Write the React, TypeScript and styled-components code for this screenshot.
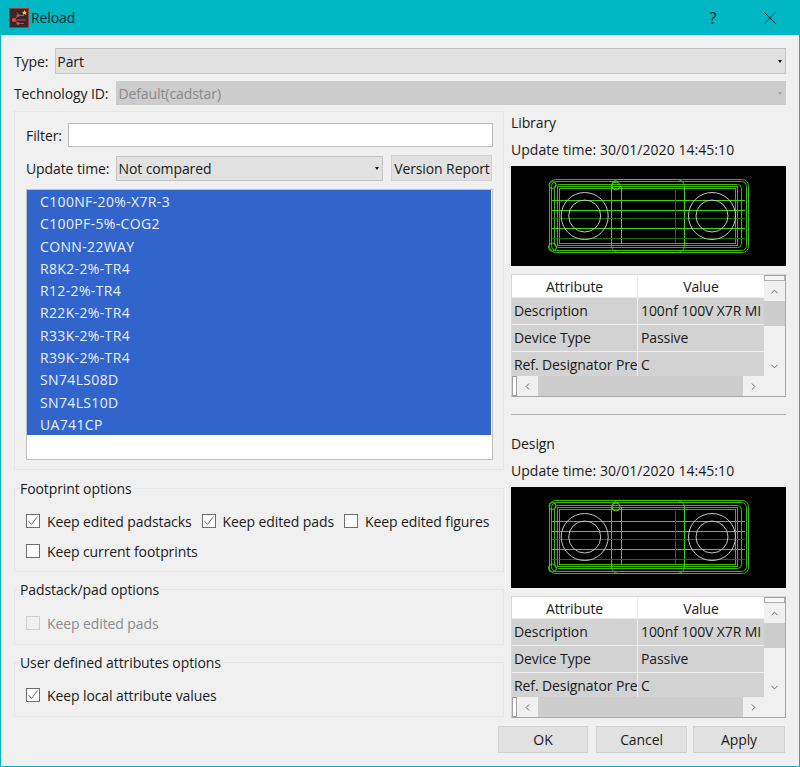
import React from "react";
import styled, { createGlobalStyle } from "styled-components";
import { ChevronUp, ChevronDown, ChevronLeft, ChevronRight } from "lucide-react";

const Global = createGlobalStyle`
  html, body { margin: 0; padding: 0; background: #f0f0f0; }
  * { box-sizing: border-box; }
`;

const Window = styled.div`
  width: 800px;
  height: 767px;
  display: flex;
  flex-direction: column;
  overflow: hidden;
  border: 1px solid #00b7c3;
  border-top: 0;
  background: #f0f0f0;
  color: #1a1a1a;
  font-family: "Open Sans", "Noto Sans", sans-serif;
  font-size: 14px;
  letter-spacing: -0.1px;
`;

const TitleBar = styled.div`
  height: 35px;
  flex: none;
  display: flex;
  align-items: center;
  background: #00b7c3;
  padding-left: 8px;
  color: #0c2a2e;
`;

const TitleText = styled.span`
  margin-left: 2px;
  flex: 1;
`;

const HelpMark = styled.span`
  width: 20px;
  text-align: center;
  font-size: 16px;
  margin-right: 41px;
`;

const CloseMark = styled.svg`
  width: 12px;
  height: 12px;
  margin-right: 23px;
`;

const Content = styled.div`
  flex: 1;
  display: flex;
  flex-direction: column;
  padding: 13px 13px 0;
`;

const FormRow = styled.div<{ $gap: number; $mb: number }>`
  display: flex;
  align-items: center;
  gap: ${(p) => p.$gap}px;
  margin-bottom: ${(p) => p.$mb}px;
`;

const Combo = styled.div<{ $h: number; $disabled?: boolean; $w?: number }>`
  flex: ${(p) => (p.$w ? "none" : "1")};
  width: ${(p) => (p.$w ? `${p.$w}px` : "auto")};
  height: ${(p) => p.$h}px;
  display: flex;
  align-items: center;
  justify-content: space-between;
  padding: 0 3px 0 1px;
  background: ${(p) => (p.$disabled ? "#cccccc" : "#e1e1e1")};
  border: 1px solid ${(p) => (p.$disabled ? "#cccccc" : "#c4c4c4")};
  color: ${(p) => (p.$disabled ? "#8a8a8a" : "#1a1a1a")};
`;

const ComboArrow = styled.i<{ $disabled?: boolean }>`
  width: 0;
  height: 0;
  border-left: 2.5px solid transparent;
  border-right: 2.5px solid transparent;
  border-top: 3px solid ${(p) => (p.$disabled ? "#a8a8a8" : "#111")};
`;

const Columns = styled.div`
  display: grid;
  grid-template-columns: 490px 275px;
  column-gap: 7px;
`;

const LeftCol = styled.div`
  display: flex;
  flex-direction: column;
`;

const RightCol = styled.div`
  display: flex;
  flex-direction: column;
`;

const Panel = styled.div`
  height: 359px;
  border: 1px solid #e6e6e6;
  padding: 11px 10px 9px 11px;
  display: flex;
  flex-direction: column;
  margin-bottom: 9px;
`;

const FilterInput = styled.div`
  flex: 1;
  height: 24px;
  background: #fff;
  border: 1px solid #bcbcbc;
`;

const PlainButton = styled.button<{ $w: number; $h: number; $ml?: number }>`
  width: ${(p) => p.$w}px;
  height: ${(p) => p.$h}px;
  margin-left: ${(p) => p.$ml ?? 0}px;
  flex: none;
  padding: 0;
  font: inherit;
  letter-spacing: inherit;
  color: #1a1a1a;
  background: #e1e1e1;
  border: 1px solid #d2d2d2;
`;

const ListBox = styled.div`
  height: 271px;
  background: #fff;
  border: 1px solid #c0c0c0;
  padding-right: 1px;
  display: flex;
  flex-direction: column;
`;

const ListRow = styled.div`
  height: 22.3px;
  line-height: 24px;
  padding-left: 13px;
  letter-spacing: 0.35px;
  background: #3165cc;
  color: #eaf0fb;
`;

const Group = styled.fieldset<{ $mb: number; $pt: number; $pb: number }>`
  margin: 0 0 ${(p) => p.$mb}px;
  padding: ${(p) => p.$pt}px 11px ${(p) => p.$pb}px;
  border: 1px solid #e6e6e6;
  min-width: 0;
`;

const GroupTitle = styled.legend`
  padding: 0;
  margin-left: -6px;
  height: 19px;
  line-height: 19px;
`;

const CheckRows = styled.div`
  display: flex;
  flex-wrap: wrap;
  gap: 12px 10px;
`;

const CheckLabel = styled.label<{ $disabled?: boolean }>`
  display: inline-flex;
  align-items: center;
  height: 18px;
  gap: 7px;
  color: ${(p) => (p.$disabled ? "#8c8c8c" : "#1a1a1a")};
`;

const CheckBox = styled.span<{ $disabled?: boolean }>`
  width: 14px;
  height: 14px;
  display: inline-flex;
  align-items: center;
  justify-content: center;
  background: ${(p) => (p.$disabled ? "#f0f0f0" : "#fff")};
  border: 1px solid ${(p) => (p.$disabled ? "#d0d0d0" : "#6e6e6e")};
`;

const Line = styled.div<{ $mb: number; $mt?: number; $wide?: boolean }>`
  height: 19px;
  line-height: 19px;
  letter-spacing: ${(p) => (p.$wide ? "0.05px" : "inherit")};
  margin-top: ${(p) => p.$mt ?? 0}px;
  margin-bottom: ${(p) => p.$mb}px;
`;

const PreviewFrame = styled.svg<{ $h: number }>`
  display: block;
  width: 275px;
  height: ${(p) => p.$h}px;
  background: #000;
  margin-bottom: 8px;
  flex: none;
`;

const TableFrame = styled.div<{ $h: number }>`
  height: ${(p) => p.$h}px;
  display: grid;
  grid-template-columns: 1fr 21px;
  grid-template-rows: 1fr 20px;
  background: #f0f0f0;
  border: 1px solid #a8a8a8;
  border-left-color: #d8d8d8;
  border-top-color: #d8d8d8;
  flex: none;
`;

const AttrTable = styled.div<{ $head: number }>`
  display: grid;
  grid-template-columns: 125px 1fr;
  grid-template-rows: ${(p) => p.$head}px 26px 26px 1fr;
  gap: 1px;
  background: #ececec;
  overflow: hidden;
`;

const HeadCell = styled.div<{ $head: number }>`
  background: #fff;
  text-align: center;
  line-height: ${(p) => p.$head + 2}px;
  overflow: hidden;
`;

const Cell = styled.div`
  background: #d2d2d2;
  padding-left: 2px;
  line-height: 26px;
  white-space: nowrap;
  overflow: hidden;
`;

const ValueCell = styled(Cell)`
  padding-left: 3px;
`;

const VBar = styled.div`
  display: flex;
  flex-direction: column;
  align-items: center;
  background: #f0f0f0;
`;

const VHandle = styled.div`
  width: 100%;
  height: 6px;
  background: #f6f6f6;
  border: 1px solid #b0b0b0;
  border-top-color: #a0a0a0;
`;

const ArrowSlot = styled.div<{ $w?: number; $h?: number }>`
  width: ${(p) => (p.$w ? `${p.$w}px` : "100%")};
  height: ${(p) => (p.$h ? `${p.$h}px` : "100%")};
  flex: none;
  display: flex;
  align-items: center;
  justify-content: center;
  color: #606060;
`;

const VThumb = styled.div`
  width: 100%;
  height: 25px;
  flex: none;
  background: #cdcdcd;
`;

const VTrack = styled.div`
  flex: 1;
`;

const HBar = styled.div`
  display: flex;
  align-items: stretch;
  grid-column: 1 / 2;
  background: #f0f0f0;
`;

const HHandle = styled.div`
  width: 5px;
  background: #fff;
  border: 1px solid #a0a0a0;
`;

const HThumb = styled.div`
  flex: 1;
  background: #cdcdcd;
`;

const Separator = styled.hr`
  width: 100%;
  height: 1px;
  margin: 17px 0 19px;
  border: 0;
  background: #b4b4b4;
`;

const ButtonRow = styled.div`
  display: flex;
  justify-content: flex-end;
  margin-top: 8px;
  padding-right: 1px;
`;

const Logo = () => (
  <svg width="20" height="20" viewBox="0 0 20 20">
    <rect x="0.5" y="0.5" width="19" height="19" fill="#33292c" stroke="#a8382f" />
    <path d="M5 12 L9 7.5 H15 M5 12 H17 M5 12 L9 15.5 H15 M8 4.5 L11 7.5" stroke="#cf4338" strokeWidth="1" fill="none" />
    <circle cx="4.8" cy="12" r="2" fill="#e2483c" />
    <circle cx="9" cy="7.5" r="1.5" fill="#e2483c" />
    <circle cx="9" cy="15.5" r="1.5" fill="#e2483c" />
    <path d="M15.5 2 L16.3 3.8 L18 4 L16.8 5.2 L17.2 7 L15.5 6.1 L13.8 7 L14.2 5.2 L13 4 L14.7 3.8 Z" fill="#f0c23c" />
  </svg>
);

const Check = ({ color }: { color: string }) => (
  <svg width="12" height="12" viewBox="0 0 12 12">
    <path d="M1.5 6 L4.5 9.5 L10.5 1.5" fill="none" stroke={color} strokeWidth="1" />
  </svg>
);

const Option = ({ label, checked, disabled }: { label: string; checked?: boolean; disabled?: boolean }) => (
  <CheckLabel $disabled={disabled}>
    <CheckBox $disabled={disabled}>{checked && <Check color="#707070" />}</CheckBox>
    {label}
  </CheckLabel>
);

const Preview = ({ h }: { h: number }) => {
  const g = "#40d800";
  const m = "#38bc00";
  const d = "#206f00";
  return (
    <PreviewFrame $h={h} viewBox={`0 0 275 ${h}`}>
      <g fill="none" stroke={m} strokeWidth="1">
        <rect x="38.5" y="13.5" width="199" height="73" rx="6" />
        <rect x="40.5" y="15.5" width="195" height="69" rx="5" />
        <rect x="43.5" y="18.5" width="187" height="63" rx="4" />
        <rect x="46.5" y="20.5" width="180" height="59" />
        <rect x="48.5" y="22.5" width="176" height="55" />
      </g>
      <g fill="none" stroke={g} strokeWidth="1">
        <rect x="100.5" y="13.5" width="73" height="73" rx="7" />
        <path d="M41 34.5H234M41 44.5H234M41 62.5H234M110.5 20V77" />
        <circle cx="41.5" cy="19" r="3.5" />
        <circle cx="41.5" cy="81" r="4" />
        <circle cx="105" cy="20" r="4" />
      </g>
      <g fill="none" stroke={d} strokeWidth="1">
        <path d="M41 52.5H234M41 72.5H234M164.5 24V77" />
      </g>
      <g fill="none" stroke="#c4c4c4" strokeWidth="1">
        <circle cx="73.7" cy="50" r="23.5" />
        <circle cx="73.7" cy="50" r="16" />
        <circle cx="201" cy="50" r="23.5" />
        <circle cx="201" cy="50" r="16" />
      </g>
    </PreviewFrame>
  );
};

const Attributes = ({ h, head }: { h: number; head: number }) => (
  <TableFrame $h={h}>
    <AttrTable $head={head}>
      <HeadCell $head={head}>Attribute</HeadCell>
      <HeadCell $head={head}>Value</HeadCell>
      <Cell>Description</Cell>
      <ValueCell>100nf 100V X7R MI</ValueCell>
      <Cell>Device Type</Cell>
      <ValueCell>Passive</ValueCell>
      <Cell>Ref. Designator Pre</Cell>
      <ValueCell>C</ValueCell>
    </AttrTable>
    <VBar>
      <VHandle />
      <ArrowSlot $h={20}>
        <ChevronUp size={11} />
      </ArrowSlot>
      <VThumb />
      <VTrack />
      <ArrowSlot $h={20}>
        <ChevronDown size={11} />
      </ArrowSlot>
    </VBar>
    <HBar>
      <HHandle />
      <ArrowSlot $w={21}>
        <ChevronLeft size={11} />
      </ArrowSlot>
      <HThumb />
      <ArrowSlot $w={21}>
        <ChevronRight size={11} />
      </ArrowSlot>
    </HBar>
  </TableFrame>
);

const parts = [
  "C100NF-20%-X7R-3",
  "C100PF-5%-COG2",
  "CONN-22WAY",
  "R8K2-2%-TR4",
  "R12-2%-TR4",
  "R22K-2%-TR4",
  "R33K-2%-TR4",
  "R39K-2%-TR4",
  "SN74LS08D",
  "SN74LS10D",
  "UA741CP",
];

export default function App() {
  return (
    <Window>
      <Global />
      <TitleBar>
        <Logo />
        <TitleText>Reload</TitleText>
        <HelpMark>?</HelpMark>
        <CloseMark viewBox="0 0 12 12">
          <path d="M0.5 0.5L11.5 11.5M11.5 0.5L0.5 11.5" stroke="#0c2a2e" strokeWidth="1" />
        </CloseMark>
      </TitleBar>
      <Content>
        <FormRow $gap={7} $mb={7}>
          Type:
          <Combo $h={26}>
            Part
            <ComboArrow />
          </Combo>
        </FormRow>
        <FormRow $gap={8} $mb={6}>
          Technology ID:
          <Combo $h={24} $disabled>
            Default(cadstar)
            <ComboArrow $disabled />
          </Combo>
        </FormRow>
        <Columns>
          <LeftCol>
            <Panel>
              <FormRow $gap={6} $mb={8}>
                Filter:
                <FilterInput />
              </FormRow>
              <FormRow $gap={7} $mb={8}>
                Update time:
                <Combo $h={25} $w={267}>
                  Not compared
                  <ComboArrow />
                </Combo>
                <PlainButton $w={101} $h={26} $ml={1}>
                  Version Report
                </PlainButton>
              </FormRow>
              <ListBox>
                {parts.map((p) => (
                  <ListRow key={p}>{p}</ListRow>
                ))}
              </ListBox>
            </Panel>
            <Group $mb={8} $pt={14} $pb={11}>
              <GroupTitle>Footprint options</GroupTitle>
              <CheckRows>
                <Option label="Keep edited padstacks" checked />
                <Option label="Keep edited pads" checked />
                <Option label="Keep edited figures" />
                <Option label="Keep current footprints" />
              </CheckRows>
            </Group>
            <Group $mb={8} $pt={15} $pb={12}>
              <GroupTitle>Padstack/pad options</GroupTitle>
              <CheckRows>
                <Option label="Keep edited pads" disabled />
              </CheckRows>
            </Group>
            <Group $mb={0} $pt={14} $pb={12}>
              <GroupTitle>User defined attributes options</GroupTitle>
              <CheckRows>
                <Option label="Keep local attribute values" checked />
              </CheckRows>
            </Group>
          </LeftCol>
          <RightCol>
            <Line $mt={2} $mb={8}>
              Library
            </Line>
            <Line $mb={7} $wide>
              Update time: 30/01/2020 14:45:10
            </Line>
            <Preview h={100} />
            <Attributes h={123} head={22} />
            <Separator />
            <Line $mb={8}>Design</Line>
            <Line $mb={7} $wide>
              Update time: 30/01/2020 14:45:10
            </Line>
            <Preview h={101} />
            <Attributes h={122} head={21} />
          </RightCol>
        </Columns>
        <ButtonRow>
          <PlainButton $w={90} $h={27}>
            OK
          </PlainButton>
          <PlainButton $w={91} $h={27} $ml={8}>
            Cancel
          </PlainButton>
          <PlainButton $w={92} $h={27} $ml={6}>
            Apply
          </PlainButton>
        </ButtonRow>
      </Content>
    </Window>
  );
}
